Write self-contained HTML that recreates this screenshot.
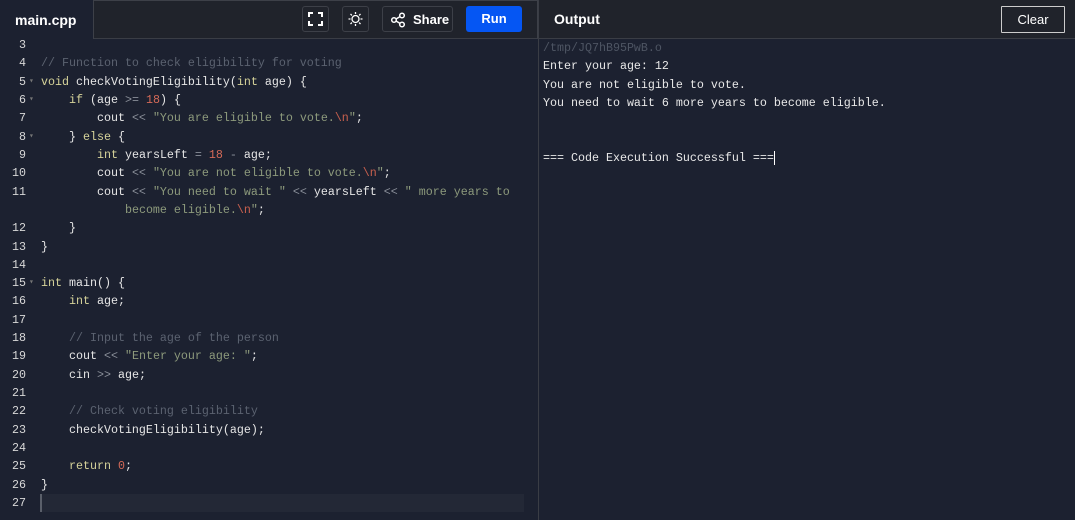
<!DOCTYPE html><html><head><style>
*{margin:0;padding:0;box-sizing:border-box}
body{width:1075px;height:520px;background:#1c2130;overflow:hidden;position:relative;font-family:"Liberation Sans",sans-serif}
.hdr{position:absolute;top:0;left:0;width:1075px;height:39px;background:#20232b;border-bottom:1px solid #3a3d45}
.tab{position:absolute;left:0;top:0;width:93px;height:40px;background:#1c2130;color:#fff;font-weight:bold;font-size:14px;padding:12px 0 0 15px}
.tb{position:absolute;left:93px;top:0;width:445px;height:39px;border:1px solid #3d4048;border-bottom:none}
.btn{position:absolute;top:6px;height:26px;border:1px solid #3d4048;border-radius:3px;color:#fff;font-size:13px;font-weight:bold}
.run{background:#0556f3;border:none;text-align:center;line-height:26px}
.vl{position:absolute;left:538px;top:0;width:1px;height:520px;background:#3a3d45}
.code{position:absolute;top:36px;left:0;width:530px;height:480px;font-family:"Liberation Mono",monospace;font-size:11.67px;line-height:18.32px;color:#e6e6e6;white-space:pre}
.ln{position:absolute;left:0;width:26px;text-align:right;color:#d8d8d8}
.f{position:absolute;left:29px;color:#777;font-size:8px}
.c{position:absolute;left:41px}
.k{color:#d6d39a}.cm{color:#5b6270}.s{color:#8d9a7c}.n{color:#d56a58}.o{color:#8a8f99}.e{color:#c9604e}
.out{position:absolute;left:543px;top:39px;font-family:"Liberation Mono",monospace;font-size:11.67px;line-height:18.32px;color:#e8e8e8;white-space:pre}
</style></head><body>
<div class="hdr"></div>
<div class="tab">main.cpp</div>
<div class="tb"></div>
<div class="btn" style="left:302px;width:27px"><svg width="25" height="24" viewBox="0 0 25 24"><path d="M6 10V6h4M15 6h4v4M19 14v4h-4M10 18H6v-4" stroke="#fff" stroke-width="2" fill="none"/></svg></div>
<div class="btn" style="left:342px;width:27px"><svg width="25" height="24" viewBox="0 0 25 24"><circle cx="12.5" cy="12" r="3.5" stroke="#fff" stroke-width="1.3" fill="none"/><path d="M12.5 5v2M12.5 17v2M5.5 12h2M17.5 12h2M7.5 7l1.4 1.4M16.1 15.6l1.4 1.4M7.5 17l1.4-1.4M16.1 8.4l1.4-1.4" stroke="#fff" stroke-width="1.3"/></svg></div>
<div class="btn" style="left:382px;width:71px"><svg style="position:absolute;left:7px;top:5px" width="16" height="16" viewBox="0 0 16 16"><circle cx="4" cy="8" r="2.3" stroke="#fff" stroke-width="1.5" fill="none"/><circle cx="12" cy="3.5" r="2.3" stroke="#fff" stroke-width="1.5" fill="none"/><circle cx="12" cy="12.5" r="2.3" stroke="#fff" stroke-width="1.5" fill="none"/><path d="M6 7l4-2.4M6 9l4 2.4" stroke="#fff" stroke-width="1.5"/></svg><span style="position:absolute;left:30px;top:5px">Share</span></div>
<div class="btn run" style="left:466px;width:56px">Run</div>
<div style="position:absolute;left:554px;top:11px;color:#fff;font-weight:bold;font-size:14px">Output</div>
<div class="btn" style="left:1001px;width:64px;height:27px;border-color:#ccc;border-radius:1px;font-weight:normal;text-align:center;line-height:25px">Clear</div>
<div class="vl"></div>
<div style="position:absolute;left:40px;top:494px;width:484px;height:18px;background:#232836"></div>
<div style="position:absolute;left:40px;top:494px;width:2px;height:18px;background:#5a5f6a"></div>
<div class="code"><span class="ln" style="top:0">3</span><span class="ln" style="top:18.32px">4</span><span class="c cm" style="top:18.32px">// Function to check eligibility for voting</span><span class="ln" style="top:36.64px">5</span><span class="f" style="top:36.64px">▾</span><span class="c" style="top:36.64px"><span class="k">void</span> checkVotingEligibility(<span class="k">int</span> age) {</span><span class="ln" style="top:54.96px">6</span><span class="f" style="top:54.96px">▾</span><span class="c" style="top:54.96px">    <span class="k">if</span> (age <span class="o">&gt;=</span> <span class="n">18</span>) {</span><span class="ln" style="top:73.28px">7</span><span class="c" style="top:73.28px">        cout <span class="o">&lt;&lt;</span> <span class="s">"You are eligible to vote.<span class="e">\n</span>"</span>;</span><span class="ln" style="top:91.6px">8</span><span class="f" style="top:91.6px">▾</span><span class="c" style="top:91.6px">    } <span class="k">else</span> {</span><span class="ln" style="top:109.92px">9</span><span class="c" style="top:109.92px">        <span class="k">int</span> yearsLeft <span class="o">=</span> <span class="n">18</span> <span class="o">-</span> age;</span><span class="ln" style="top:128.24px">10</span><span class="c" style="top:128.24px">        cout <span class="o">&lt;&lt;</span> <span class="s">"You are not eligible to vote.<span class="e">\n</span>"</span>;</span><span class="ln" style="top:146.56px">11</span><span class="c" style="top:146.56px">        cout <span class="o">&lt;&lt;</span> <span class="s">"You need to wait "</span> <span class="o">&lt;&lt;</span> yearsLeft <span class="o">&lt;&lt;</span> <span class="s">" more years to</span></span><span class="c" style="top:164.88px">            <span class="s">become eligible.<span class="e">\n</span>"</span>;</span><span class="ln" style="top:183.2px">12</span><span class="c" style="top:183.2px">    }</span><span class="ln" style="top:201.52px">13</span><span class="c" style="top:201.52px">}</span><span class="ln" style="top:219.84px">14</span><span class="ln" style="top:238.16px">15</span><span class="f" style="top:238.16px">▾</span><span class="c" style="top:238.16px"><span class="k">int</span> main() {</span><span class="ln" style="top:256.48px">16</span><span class="c" style="top:256.48px">    <span class="k">int</span> age;</span><span class="ln" style="top:274.8px">17</span><span class="ln" style="top:293.12px">18</span><span class="c cm" style="top:293.12px">    // Input the age of the person</span><span class="ln" style="top:311.44px">19</span><span class="c" style="top:311.44px">    cout <span class="o">&lt;&lt;</span> <span class="s">"Enter your age: "</span>;</span><span class="ln" style="top:329.76px">20</span><span class="c" style="top:329.76px">    cin <span class="o">&gt;&gt;</span> age;</span><span class="ln" style="top:348.08px">21</span><span class="ln" style="top:366.4px">22</span><span class="c cm" style="top:366.4px">    // Check voting eligibility</span><span class="ln" style="top:384.72px">23</span><span class="c" style="top:384.72px">    checkVotingEligibility(age);</span><span class="ln" style="top:403.04px">24</span><span class="ln" style="top:421.36px">25</span><span class="c" style="top:421.36px">    <span class="k">return</span> <span class="n">0</span>;</span><span class="ln" style="top:439.68px">26</span><span class="c" style="top:439.68px">}</span><span class="ln" style="top:458px">27</span></div>
<div class="out"><span style="color:#4e5563">/tmp/JQ7hB95PwB.o</span>
Enter your age: 12
You are not eligible to vote.
You need to wait 6 more years to become eligible.


=== Code Execution Successful ===<span style="border-left:1px solid #fff"></span></div>
</body></html>
